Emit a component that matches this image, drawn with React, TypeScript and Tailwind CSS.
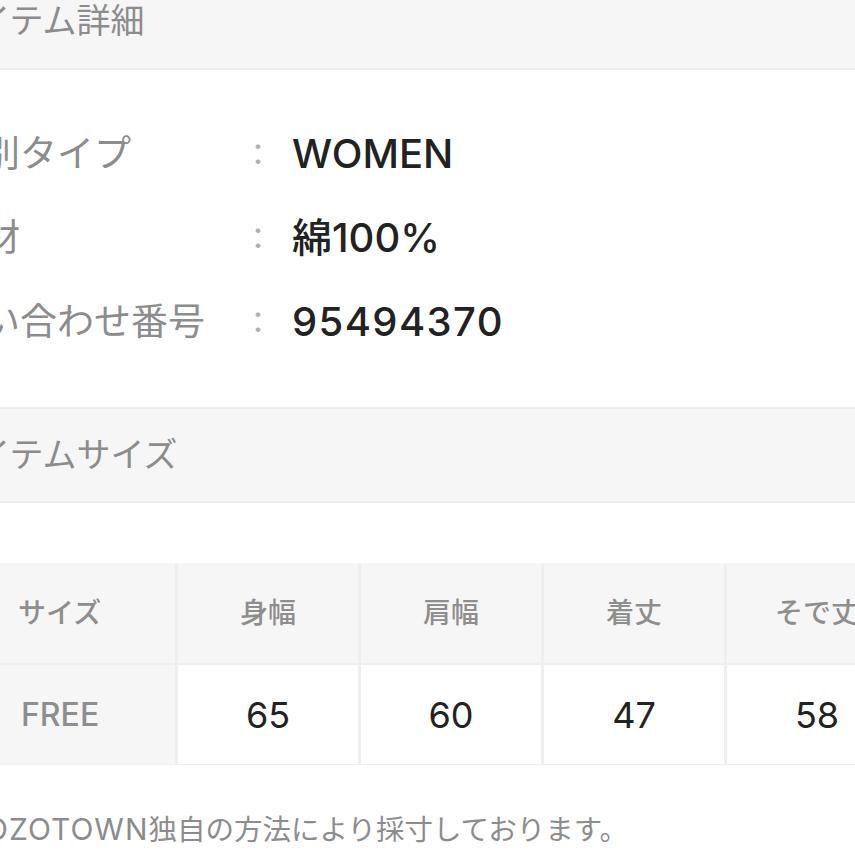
import { memo } from 'react';

const details = [
  { label: '性別タイプ', value: 'WOMEN', wide: false },
  { label: '素材', value: '綿100%', wide: false },
  { label: '問い合わせ番号', value: '95494370', wide: true },
];

const sizeHeads = ['身幅', '肩幅', '着丈', 'そで丈'];
const sizeValues = ['65', '60', '47', '58'];

function SectionHead({ title, className }: { title: string; className?: string }) {
  return (
    <div
      className={`flex h-[96px] items-center border-y-2 border-[#ececec] bg-[#f6f6f6] ${className ?? ''}`}
    >
      <h2 className="-ml-[56px] text-[34px] leading-none whitespace-nowrap text-[#8c8c8c]">
        {title}
      </h2>
    </div>
  );
}

function App() {
  return (
    <div className="h-[855px] w-[855px] overflow-hidden bg-white font-['Inter','Noto_Sans_CJK_JP',sans-serif]">
      <SectionHead title="アイテム詳細" className="-mt-[26px] border-t-0" />

      <div className="pt-[42px] pb-[43px]">
        {details.map((row) => (
          <div key={row.label} className="flex h-[84px] items-center whitespace-nowrap">
            <span className="-ml-[54px] w-[297px] shrink-0 text-[37px] text-[#8c8c8c]">
              {row.label}
            </span>
            <span className="w-[28px] shrink-0 text-center text-[30px] text-[#b0b0b0]">：</span>
            <span
              className={`ml-[21px] text-[40px] font-medium text-[#222] ${row.wide ? 'tracking-[0.035em]' : ''}`}
            >
              {row.value}
            </span>
          </div>
        ))}
      </div>

      <SectionHead title="アイテムサイズ" />

      <div className="mt-[60px] -ml-[5px] grid w-max grid-cols-[repeat(5,180px)] gap-x-[3px] gap-y-[2px] bg-[#efefef] pb-px">
        <div className="flex h-[100px] items-center bg-[#f6f6f6] pl-[23px] text-[28px] font-medium text-[#8e8e8e]">
          サイズ
        </div>
        {sizeHeads.map((h) => (
          <div
            key={h}
            className="flex h-[100px] items-center justify-center bg-[#f6f6f6] text-[28px] font-medium text-[#8e8e8e]"
          >
            {h}
          </div>
        ))}
        <div className="flex h-[99px] items-center bg-[#f6f6f6] pl-[26px] text-[32px] font-medium text-[#8e8e8e]">
          FREE
        </div>
        {sizeValues.map((v, i) => (
          <div
            key={i}
            className="flex h-[99px] items-center justify-center bg-white text-[36px] text-[#222]"
          >
            {v}
          </div>
        ))}
      </div>

      <p className="mt-[44px] -ml-[52px] text-[28.5px] leading-[40px] whitespace-nowrap text-[#8c8c8c]">
        ※<span className="text-[30px] tracking-[1px]">ZOZOTOWN</span>独自の方法により採寸しております。
      </p>
    </div>
  );
}

export default memo(App);
